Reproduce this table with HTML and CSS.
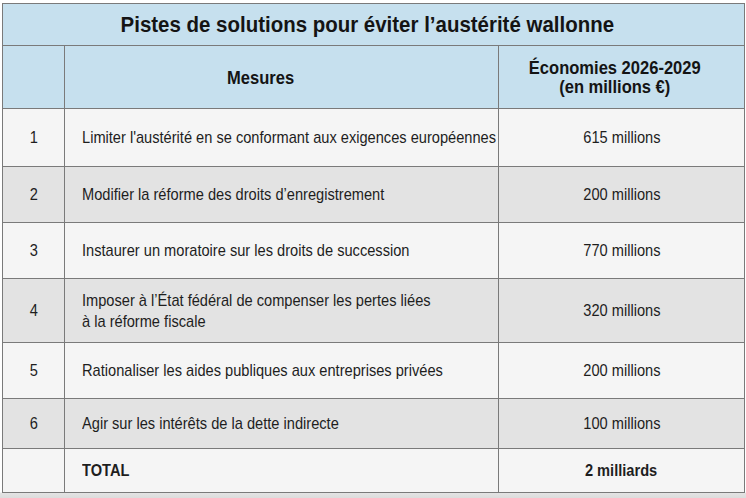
FILE: index.html
```html
<!DOCTYPE html>
<html lang="fr">
<head>
<meta charset="utf-8">
<link rel="stylesheet" href="styles.css">
</head>
<body>
<div class="page">
<table class="sol">
  <colgroup><col class="c-num"><col class="c-mes"><col class="c-eco"></colgroup>
  <thead>
    <tr class="title-row"><th colspan="3"><span class="t tc">Pistes de solutions pour éviter l’austérité wallonne</span></th></tr>
    <tr class="head-row"><th></th><th class="h-mes"><span class="t tc">Mesures</span></th><th class="h-eco"><span class="t tc">Économies 2026-2029<br>(en millions €)</span></th></tr>
  </thead>
  <tbody>
    <tr class="r1 light"><td class="num"><span class="t tc">1</span></td><td class="mes"><span class="t tl">Limiter l'austérité en se conformant aux exigences européennes</span></td><td class="eco"><span class="t tc">615 millions</span></td></tr>
    <tr class="r2 dark"><td class="num"><span class="t tc">2</span></td><td class="mes"><span class="t tl">Modifier la réforme des droits d’enregistrement</span></td><td class="eco"><span class="t tc">200 millions</span></td></tr>
    <tr class="r3 light"><td class="num"><span class="t tc">3</span></td><td class="mes"><span class="t tl">Instaurer un moratoire sur les droits de succession</span></td><td class="eco"><span class="t tc">770 millions</span></td></tr>
    <tr class="r4 dark"><td class="num"><span class="t tc">4</span></td><td class="mes"><span class="t tl">Imposer à l’État fédéral de compenser les pertes liées<br>à la réforme fiscale</span></td><td class="eco"><span class="t tc">320 millions</span></td></tr>
    <tr class="r5 light"><td class="num"><span class="t tc">5</span></td><td class="mes"><span class="t tl">Rationaliser les aides publiques aux entreprises privées</span></td><td class="eco"><span class="t tc">200 millions</span></td></tr>
    <tr class="r6 dark"><td class="num"><span class="t tc">6</span></td><td class="mes"><span class="t tl">Agir sur les intérêts de la dette indirecte</span></td><td class="eco"><span class="t tc">100 millions</span></td></tr>
    <tr class="rt light"><td class="num"></td><td class="mes bold"><span class="t tl">TOTAL</span></td><td class="eco bold"><span class="t tc">2 milliards</span></td></tr>
  </tbody>
</table>
</div>
</body>
</html>
```
FILE: styles.css
```css
html, body {
  margin: 0;
  padding: 0;
  background: #ffffff;
}
body {
  width: 746px;
  height: 498px;
  overflow: hidden;
  font-family: "Liberation Sans", Arial, sans-serif;
  color: #1e1e1e;
}
.page {
  padding: 3px 0 0 2px;
  height: 495px;
  background: linear-gradient(to bottom, #ffffff 0, #ffffff 492px, #e4e4e4 493px, #dcdcdc 498px);
}
.sol {
  border-collapse: collapse;
  width: 742px;
  table-layout: fixed;
  font-size: 17px;
}
.c-num { width: 62px; }
.c-mes { width: 434px; }
.c-eco { width: 246px; }
.sol th, .sol td {
  border: 1px solid #7a7a7a;
  padding: 0;
  vertical-align: middle;
  white-space: nowrap;
}
.t {
  display: inline-block;
  transform: scaleX(0.86);
}
.tc { transform-origin: center center; }
.tl { transform-origin: left center; }
.sol .title-row th {
  height: 41px;
  padding-right: 13px;
  background: #c6e0ee;
  font-size: 22px;
  font-weight: bold;
  text-align: center;
  color: #141414;
}
.title-row .t { transform: scaleX(0.93); }
.sol .head-row th {
  height: 62px;
  background: #c6e0ee;
  font-size: 19px;
  font-weight: bold;
  line-height: 19px;
  color: #141414;
}
.head-row .t { transform: scaleX(0.87); }
.sol .h-mes { text-align: center; padding-right: 42px; }
.sol .h-eco { text-align: center; padding-right: 14px; }
.light td { background: #f5f5f5; }
.dark td { background: #e3e3e3; }
.num { text-align: center; }
.sol .mes { padding-left: 17px; line-height: 21px; }
.eco { text-align: center; }
.bold { font-weight: bold; }
.r1 td { height: 57px; }
.r2 td { height: 55px; }
.r3 td { height: 55px; }
.r4 td { height: 63px; }
.r5 td { height: 55px; }
.r6 td { height: 49px; }
.rt td { height: 43px; }
```
